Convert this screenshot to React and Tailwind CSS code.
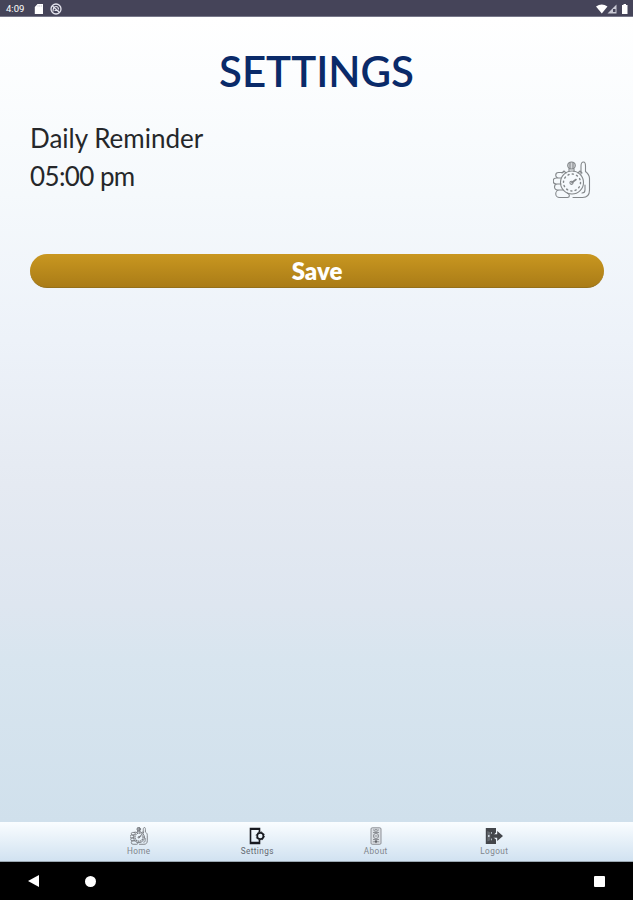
function StopwatchHand({ className, stroke }) {
  return (
    <svg viewBox="0 0 38 38" className={className} fill="none" stroke="currentColor" strokeWidth={stroke} strokeLinecap="round" strokeLinejoin="round">
      <circle cx="19" cy="21.5" r="11.5" />
      <circle cx="19" cy="21.5" r="8.500" strokeWidth={stroke * 1.3} strokeDasharray="1.2 3.25" />
      <path d="M19 21.5l4-3" strokeWidth={stroke * 1.5} />
      <circle cx="18.5" cy="21.8" r="1.6" />
      <ellipse cx="18.5" cy="4.5" rx="3.8" ry="3.5" fill="currentColor" fillOpacity=".3" />
      <path d="M17 1.5v6M20 1.5v6M16 8v2.5M21 8v2.5M9 12l2-2 2 2M25 12l2-2 2 2" />
      <path d="M10 11.500H5.5a2.6 2.6 0 0 0 0 5.5H8M8 17H3.200a2.700 2.700 0 0 0 0 6H8M8 23H4.500a2.800 2.800 0 0 0 0 6H10M10 29H6.500a3.200 3.200 0 0 0 0 7.500H14.500c2.500 0 2.500-3 0-4.500" />
      <path d="M28 13V5c0-2.500 1-4 2.500-4s2 2 2 4v5.500c2.500 2 4 3.500 4 7V29c0 5-2.500 7.500-7 7.500H20M32 24v5c0 2-1 3-3 3" />
    </svg>
  );
}

function SettingsIcon() {
  return (
    <svg viewBox="0 0 18 18" className="size-[18px]" fill="none" stroke="#181a20">
      <path d="M11.500 5V1.500h-9v15h9V13" strokeWidth="1.600" />
      <path d="M2.500 2h9M2.500 15.800h9" strokeWidth="2.200" />
      <circle cx="12.300" cy="9" r="3.100" strokeWidth="1.700" />
      <circle cx="12.300" cy="9" r="4.200" strokeWidth=".8" strokeDasharray="1.500 1.800" />
    </svg>
  );
}

function AboutIcon() {
  return (
    <svg viewBox="0 0 18 18" className="size-[18px]" fill="none" stroke="#84878c" strokeWidth=".9">
      <rect x="4" y=".8" width="10" height="16.500" rx="1.200" fill="#dce0e5" />
      <path d="M6 3h1.500M10.500 3H12M5.800 14.800h1.500M10.700 14.800h1.500M6 5.500h6M6 12.500h6" />
      <circle cx="9" cy="3.800" r="1.300" />
      <circle cx="9" cy="9" r="2.600" />
      <path d="M7.500 9h3" />
      <circle cx="9" cy="14.600" r="1.200" fill="#55585d" />
    </svg>
  );
}

function LogoutIcon() {
  return (
    <svg viewBox="0 0 18 18" className="size-[18px]" fill="#43464b">
      <path d="M.8 1H11v4.500L8.500 8v2.500L11 12.500V17H.8z" />
      <path d="M7.500 7.200h4.700V4L18 9l-5.800 5v-3.200H7.500z" />
      <path d="M2.300 4l3 1.200v8l-3 1.300z" fill="#666a70" />
      <path d="M6.500 5v1.800M6.500 11.500v1.800" stroke="#dde7f1" strokeWidth=".7" />
      <circle cx="3.800" cy="9" r=".9" fill="#dce6f0" />
    </svg>
  );
}

const tabs = [
  { label: "Home", icon: <StopwatchHand className="size-[18px] text-[#777b80]" stroke={1.9} />, color: "text-[#7f858c]" },
  { label: "Settings", icon: <SettingsIcon />, color: "text-[#626870]" },
  { label: "About", icon: <AboutIcon />, color: "text-[#7f858c]" },
  { label: "Logout", icon: <LogoutIcon />, color: "text-[#7f858c]" },
];

function StatusBar() {
  return (
    <header className="flex h-[17px] items-center border-b border-[#77788a] bg-[#454459] pt-[2px] pr-1 pl-[6px] text-white">
      <span className="w-[28px] font-['Roboto',sans-serif] text-[9.500px] leading-none">4:09</span>
      <svg viewBox="0 0 10 10" className="size-[10px]" fill="#fff"><path d="M3.500 0H9v10H.8V3z" /><path d="M4 1.200v1.500M5.700 1.200v1.500M7.400 1.200v1.500" stroke="#aaaab8" strokeWidth=".5" /></svg>
      <svg viewBox="0 0 12 12" className="ml-[6px] size-[12px]" fill="none" stroke="#e5e5ee"><circle cx="6" cy="6" r="5" strokeWidth="1.300" /><path d="M3 8.500c0-3 1-5 3-5s2.500 1.500 2.500 3M2.500 3l7 6.500M4.500 7.500h4" strokeWidth="1.100" /></svg>
      <svg viewBox="0 0 34 12" className="ml-auto h-[12px] w-[34px]" fill="#fff"><path d="M1 3.500q5.800-4 11.500 0L6.800 10.500z" /><path d="M21.500 1.500v9h-9z" fill="#c9c9d4" /><path d="M18 6h2.500v3H18z" fill="#454459" /><path d="M27 2h1.500V1h2.500v1h1.500v9H27z" /></svg>
    </header>
  );
}

export default function App() {
  return (
    <div className="flex h-[900px] w-[633px] flex-col overflow-hidden bg-black font-['Lato',sans-serif]">
      <StatusBar />
      <main className="h-[805px] bg-[linear-gradient(to_bottom,#ffffff_0%,#f5f9fc_22%,#edf2f9_40%,#e5eaf2_58%,#dee6f0_73%,#d8e5ef_80%,#d0e0ec_100%)] px-[30px]">
        <h1 className="mt-[28px] text-center text-[42px] leading-[52px] font-semibold text-[#0a2a69]">SETTINGS</h1>
        <section className="mt-[22px] flex text-[26px] leading-[38px] text-[#25272a]">
          <div className="flex-1">
            <p>Daily Reminder</p>
            <p className="tracking-[-0.6px]">05:00 pm</p>
          </div>
          <StopwatchHand className="mt-[42px] mr-[12px] size-[38px] text-[#83878a]" stroke={1.1} />
        </section>
        <button className="mt-[55px] flex h-[34px] w-[574px] items-center justify-center rounded-full border-b border-[#95701a] bg-linear-to-b from-[#c99720] to-[#aa7c17] pt-px text-[24px] leading-none font-extrabold text-white">Save</button>
      </main>
      <nav className="flex h-[40px] justify-center border-b border-[#9ba8b2] bg-linear-to-b from-[#fafdff] to-[#d1e2f1]">
        {tabs.map((tab) => (
          <div key={tab.label} className={`flex w-[118.500px] flex-col items-center pt-[5px] ${tab.color}`}>
            {tab.icon}
            <span className="mt-[2px] font-['Roboto',sans-serif] text-[8.200px] leading-[9px] tracking-[0.4px]">{tab.label}</span>
          </div>
        ))}
      </nav>
      <footer className="flex h-[38px] items-center bg-black pr-[28px] pl-[28px]">
        <svg viewBox="0 0 12 12" className="size-[12px]" fill="#fff"><path d="M11 0v12L0 6z" /></svg>
        <span className="ml-[45px] size-[11px] rounded-full bg-white" />
        <span className="ml-auto size-[11px] rounded-[1px] bg-white" />
      </footer>
    </div>
  );
}
